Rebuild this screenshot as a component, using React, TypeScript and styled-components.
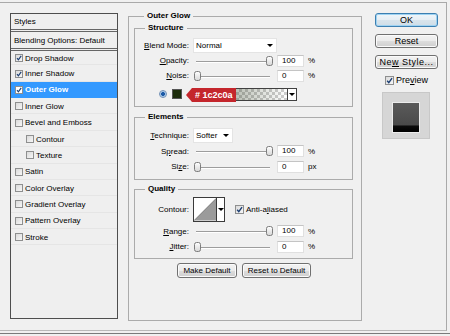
import React from 'react'
import styled, { createGlobalStyle } from 'styled-components'

const FONT = `'Liberation Sans', Arial, sans-serif`

const GlobalStyle = createGlobalStyle`
  html, body {
    margin: 0;
    padding: 0;
    background: #f0f0f0;
  }
  body {
    font-family: ${FONT};
    font-size: 8px;
    color: #000;
    width: 450px;
    height: 336px;
    overflow: hidden;
  }
`

const Frame = styled.div`
  width: 447px;
  height: 329px;
  box-sizing: border-box;
  margin-top: 2px;
  border-top: 1px solid #a9a9a9;
  border-right: 1px solid #a9a9a9;
  border-bottom: 1px solid #b9b9b9;
  display: flex;
  align-items: flex-start;
`

const BaseRule = styled.div`
  margin-top: 2px;
  height: 1px;
  width: 450px;
  background: #7a7a7a;
`

/* ---------- left list ---------- */

const StylesPanel = styled.div`
  margin: 10px 0 0 10px;
  width: 108px;
  height: 306px;
  box-sizing: border-box;
  border: 1px solid #4e4e4e;
  background: #efefef;
  flex-shrink: 0;
`

const PanelHead = styled.div<{ $h: number }>`
  height: ${p => p.$h}px;
  display: flex;
  align-items: center;
  padding-left: 3px;
  border-bottom: 3px double #666;
`

const LayerRow = styled.div<{ $active?: boolean; $indent?: boolean; $first?: boolean }>`
  height: ${p => (p.$first ? 14.4 : 16.36)}px;
  box-sizing: border-box;
  display: flex;
  align-items: center;
  gap: 2px;
  padding-left: ${p => (p.$indent ? 15 : 4)}px;
  background: ${p => (p.$active ? '#3399ff' : 'transparent')};
  color: ${p => (p.$active ? '#fff' : '#000')};
  font-weight: ${p => (p.$active ? 'bold' : 'normal')};
  box-shadow: ${p => (p.$active ? 'none' : 'inset 0 -1px 0 #e5e5e5')};
`

const Box = styled.span<{ $size: number; $white?: boolean }>`
  width: ${p => p.$size}px;
  height: ${p => p.$size}px;
  box-sizing: border-box;
  border: 1px solid #8e8f8f;
  background: ${p => (p.$white ? '#fff' : 'linear-gradient(135deg, #dadada, #f7f7f7)')};
  display: inline-flex;
  align-items: center;
  justify-content: center;
  flex-shrink: 0;
`

const Check: React.FC<{ on?: boolean; size?: number; white?: boolean }> = ({ on, size = 8, white }) => (
  <Box $size={size} $white={white}>
    {on && (
      <svg width={size - 2} height={size - 2} viewBox="0 0 6 6">
        <path d="M1 3.2 L2.4 4.8 L5.2 0.9" fill="none" stroke="#1d3f73" strokeWidth="1.2" />
      </svg>
    )}
  </Box>
)

/* ---------- middle ---------- */

const OuterGroup = styled.fieldset`
  margin: 8px 0 0 10px;
  width: 234px;
  box-sizing: border-box;
  padding: 2px 8px 42px 5px;
  border: 1px solid #ababab;
  min-width: 0;
  flex-shrink: 0;
`

const Group = styled.fieldset<{ $pt: number; $pb: number; $mt: number }>`
  margin: ${p => p.$mt}px 0 0 0;
  padding: ${p => p.$pt}px 0 ${p => p.$pb}px 0;
  border: 1px solid #ababab;
  min-width: 0;
`

const Legend = styled.legend`
  margin-left: 10px;
  padding: 0 3px;
  font-weight: bold;
  font-size: 8px;
  line-height: 10px;
`

const ControlRow = styled.div<{ $h: number }>`
  height: ${p => p.$h}px;
  display: grid;
  grid-template-columns: 54px 80px 27px auto;
  column-gap: 4px;
  align-items: center;
`

const Label = styled.span`
  text-align: right;
  white-space: nowrap;
`

const Select = styled.div<{ $w: number }>`
  grid-column: span 3;
  justify-self: start;
  width: ${p => p.$w}px;
  height: 15px;
  box-sizing: border-box;
  background: #fff;
  border: 1px solid #e4e4e4;
  display: flex;
  align-items: center;
  justify-content: space-between;
  padding: 0 3px 0 2px;
`

const Caret = styled.span`
  width: 0;
  height: 0;
  border-left: 3px solid transparent;
  border-right: 3px solid transparent;
  border-top: 3px solid #000;
`

const Slider = styled.div`
  position: relative;
  width: 80px;
  height: 12px;
  &::before {
    content: '';
    position: absolute;
    left: 3px;
    right: 3px;
    top: 6px;
    height: 1px;
    background: #9d9d9d;
    box-shadow: 0 1px 0 #fff;
  }
`

const Thumb = styled.svg`
  position: absolute;
  top: 1px;
`

const NumField = styled.div`
  width: 27px;
  height: 12px;
  box-sizing: border-box;
  background: #fff;
  border: 1px solid #e0e0e0;
  border-top-color: #c4c4c4;
  padding-left: 4px;
  line-height: 10px;
`

const SliderRow: React.FC<{ h: number; label: React.ReactNode; value: number; unit: string }> = ({ h, label, value, unit }) => (
  <ControlRow $h={h}>
    <Label>{label}</Label>
    <Slider>
      <Thumb width="7" height="10" viewBox="0 0 7 10" style={{ left: 1 + (value / 100) * 72 }}>
        <defs>
          <linearGradient id="tg" x1="0" x2="0" y1="0" y2="1">
            <stop offset="0" stopColor="#ffffff" />
            <stop offset="1" stopColor="#d6d6d6" />
          </linearGradient>
        </defs>
        <rect x="0.5" y="0.5" width="6" height="9" rx="2" fill="url(#tg)" stroke="#7d7d7d" />
      </Thumb>
    </Slider>
    <NumField>{value}</NumField>
    <span>{unit}</span>
  </ControlRow>
)

const ColorRow = styled.div`
  height: 14px;
  margin-top: 4px;
  padding-left: 24px;
  display: flex;
  align-items: center;
`

const Radio = styled.span`
  width: 8px;
  height: 8px;
  border-radius: 50%;
  box-sizing: border-box;
  border: 1px solid #6f8fb5;
  background: radial-gradient(circle, #1c5aa6 0 1.6px, #9cc0e6 2.2px, #eef4fb 4px);
`

const Swatch = styled.span`
  width: 10px;
  height: 10px;
  margin-left: 5px;
  box-sizing: border-box;
  border: 1px solid #555;
  background: #1c2c0a;
`

const GradientBox = styled.div`
  position: relative;
  margin-left: 11px;
  width: 104px;
  height: 13px;
  box-sizing: border-box;
  border: 1px solid #404040;
  display: flex;
`

const GradientFill = styled.div`
  flex: 1;
  background:
    linear-gradient(to right, rgba(28, 44, 10, 0.55), rgba(28, 44, 10, 0)),
    conic-gradient(#cfcfcf 25%, #ffffff 0 50%, #cfcfcf 0 75%, #ffffff 0) 0 0 / 6px 6px;
`

const DropPart = styled.div`
  width: 8px;
  border-left: 1px solid #404040;
  background: #fff;
  display: flex;
  align-items: center;
  justify-content: center;
`

const Callout = styled.div`
  position: absolute;
  left: -8px;
  top: -1px;
  width: 44px;
  height: 14px;
  margin-left: 6px;
  background: #c4262c;
  color: #fff;
  font-weight: bold;
  font-size: 9px;
  line-height: 14px;
  padding-left: 3px;
  box-sizing: border-box;
  white-space: nowrap;
  &::before {
    content: '';
    position: absolute;
    left: -6px;
    top: 0;
    border-top: 7px solid transparent;
    border-bottom: 7px solid transparent;
    border-right: 6px solid #c4262c;
  }
`

const ContourCell = styled.div`
  grid-column: span 3;
  display: flex;
  align-items: center;
`

const ContourPicker = styled.div`
  width: 32px;
  height: 25px;
  box-sizing: border-box;
  border: 1px solid #3a3a3a;
  background: #fff;
  display: flex;
`

const ContourArrow = styled.div`
  width: 7px;
  border-left: 1px solid #3a3a3a;
  display: flex;
  align-items: center;
  justify-content: center;
`

const Inline = styled.label`
  display: flex;
  align-items: center;
  gap: 2px;
  margin-left: 10px;
`

const ButtonRow = styled.div`
  margin-top: 4px;
  display: flex;
  justify-content: center;
  gap: 5px;
  padding-left: 1px;
`

const Button = styled.button<{ $w: number; $h: number; $default?: boolean; $size?: number }>`
  width: ${p => p.$w}px;
  height: ${p => p.$h}px;
  box-sizing: border-box;
  padding: 0;
  margin: 0;
  font-family: ${FONT};
  font-size: ${p => p.$size ?? 8}px;
  color: #000;
  border: 1px solid ${p => (p.$default ? '#3c7fb1' : '#707070')};
  border-radius: 3px;
  background: ${p =>
    p.$default
      ? 'linear-gradient(#f0f6fa 0%, #e6eef4 50%, #d8e4ec 51%, #cfdde7 100%)'
      : 'linear-gradient(#f2f2f2 0%, #ebebeb 50%, #dddddd 51%, #cfcfcf 100%)'};
  box-shadow: inset 0 0 0 1px ${p => (p.$default ? '#9fd3f2' : '#fbfbfb')};
  display: flex;
  align-items: center;
  justify-content: center;
  white-space: nowrap;
`

/* ---------- right column ---------- */

const SideColumn = styled.div`
  margin: 10px 0 0 13px;
  width: 63px;
  display: flex;
  flex-direction: column;
  gap: 7px;
`

const PreviewToggle = styled.label`
  height: 12px;
  margin: -2px 0 0 10px;
  display: flex;
  align-items: center;
  gap: 2px;
  font-size: 9px;
`

const PreviewBox = styled.div`
  margin: -1px 0 0 7px;
  width: 48px;
  height: 47px;
  box-sizing: border-box;
  border: 1px solid #c8c8c8;
  background: #d6d6d6;
  padding-top: 10px;
  display: flex;
  justify-content: center;
`

const PreviewSquare = styled.div`
  width: 26px;
  height: 29px;
  background: linear-gradient(#5a5a5a 0%, #4a4a4a 76%, #0c0c0c 79%, #000 100%);
  box-shadow: 0 0 0 1px #ececec;
`

const layers: { name: string; on?: boolean; active?: boolean; indent?: boolean }[] = [
  { name: 'Drop Shadow', on: true },
  { name: 'Inner Shadow', on: true },
  { name: 'Outer Glow', on: true, active: true },
  { name: 'Inner Glow' },
  { name: 'Bevel and Emboss' },
  { name: 'Contour', indent: true },
  { name: 'Texture', indent: true },
  { name: 'Satin' },
  { name: 'Color Overlay' },
  { name: 'Gradient Overlay' },
  { name: 'Pattern Overlay' },
  { name: 'Stroke' },
]

const App: React.FC = () => {
  return (
    <>
      <GlobalStyle />
      <Frame>
        <StylesPanel>
          <PanelHead $h={15}>Styles</PanelHead>
          <PanelHead $h={16}>Blending Options: Default</PanelHead>
          {layers.map((l, i) => (
            <LayerRow key={l.name} $active={l.active} $indent={l.indent} $first={i === 0}>
              <Check on={l.on} white={l.active} />
              <span>{l.name}</span>
            </LayerRow>
          ))}
        </StylesPanel>

        <OuterGroup>
          <Legend>Outer Glow</Legend>

          <Group $mt={0} $pt={4} $pb={5}>
            <Legend>Structure</Legend>
            <ControlRow $h={16}>
              <Label><u>B</u>lend Mode:</Label>
              <Select $w={84}>
                <span>Normal</span>
                <Caret />
              </Select>
            </ControlRow>
            <SliderRow h={15} label={<><u>O</u>pacity:</>} value={100} unit="%" />
            <SliderRow h={15} label={<><u>N</u>oise:</>} value={0} unit="%" />
            <ColorRow>
              <Radio />
              <Swatch />
              <GradientBox>
                <GradientFill />
                <DropPart>
                  <Caret />
                </DropPart>
                <Callout># 1c2c0a</Callout>
              </GradientBox>
            </ColorRow>
          </Group>

          <Group $mt={5} $pt={5} $pb={5}>
            <Legend>Elements</Legend>
            <ControlRow $h={16}>
              <Label><u>T</u>echnique:</Label>
              <Select $w={40}>
                <span>Softer</span>
                <Caret />
              </Select>
            </ControlRow>
            <SliderRow h={16} label={<>S<u>p</u>read:</>} value={100} unit="%" />
            <SliderRow h={15} label={<>Si<u>z</u>e:</>} value={0} unit="px" />
          </Group>

          <Group $mt={4} $pt={2} $pb={4}>
            <Legend>Quality</Legend>
            <ControlRow $h={27}>
              <Label>Contour:</Label>
              <ContourCell>
                <ContourPicker>
                  <svg width="23" height="23" viewBox="0 0 23 23">
                    <polygon points="0,23 23,0 23,23" fill="#9b9b9b" />
                    <line x1="0" y1="23" x2="23" y2="0" stroke="#6e6e6e" strokeWidth="0.8" />
                  </svg>
                  <ContourArrow>
                    <Caret />
                  </ContourArrow>
                </ContourPicker>
                <Inline>
                  <Check on size={9} />
                  <span>Anti-a<u>l</u>iased</span>
                </Inline>
              </ContourCell>
            </ControlRow>
            <SliderRow h={16} label={<><u>R</u>ange:</>} value={100} unit="%" />
            <SliderRow h={15} label={<><u>J</u>itter:</>} value={0} unit="%" />
          </Group>

          <ButtonRow>
            <Button $w={60} $h={15}>Make Default</Button>
            <Button $w={69} $h={15}>Reset to Default</Button>
          </ButtonRow>
        </OuterGroup>

        <SideColumn>
          <Button $w={63} $h={14} $size={9} $default>OK</Button>
          <Button $w={63} $h={14} $size={9}>Reset</Button>
          <Button $w={63} $h={14} $size={9} style={{ letterSpacing: '0.5px' }}>
            <span>Ne<u>w</u> Style...</span>
          </Button>
          <PreviewToggle>
            <Check on size={9} />
            <span>Pre<u>v</u>iew</span>
          </PreviewToggle>
          <PreviewBox>
            <PreviewSquare />
          </PreviewBox>
        </SideColumn>
      </Frame>
      <BaseRule />
    </>
  )
}

export default App
